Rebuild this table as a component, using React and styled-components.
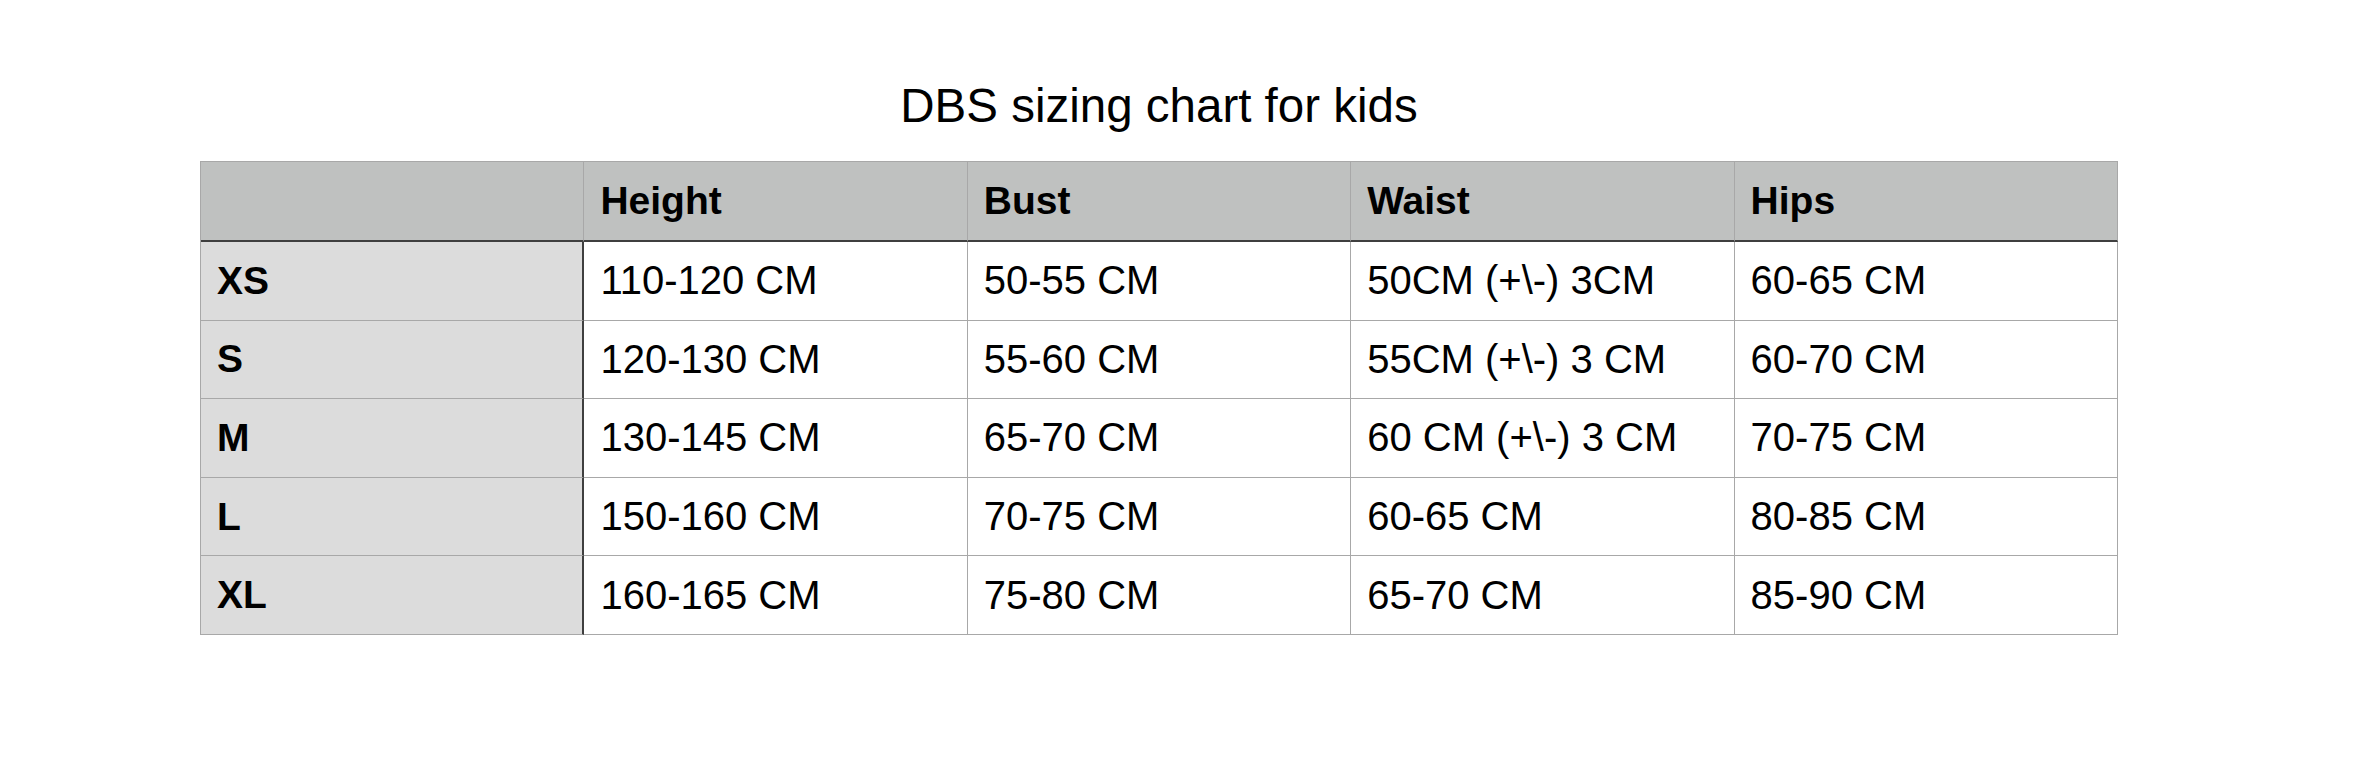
import React from 'react';
import styled, { createGlobalStyle } from 'styled-components';

const GlobalStyle = createGlobalStyle`
  body {
    margin: 0;
    background: #ffffff;
    font-family: 'Liberation Sans', Arial, sans-serif;
    color: #000000;
  }
`;

const Page = styled.div`
  width: 2369px;
  height: 782px;
  padding-top: 82px;
  box-sizing: border-box;
`;

const Chart = styled.div`
  margin-left: 200px;
  width: 1918px;
`;

const Title = styled.h1`
  margin: 0 0 32px;
  font-size: 47.5px;
  line-height: 47px;
  font-weight: normal;
  text-align: center;
`;

const Grid = styled.div`
  display: grid;
  grid-template-columns: repeat(5, 1fr);
  grid-template-rows: 80px repeat(5, 78.6px);
  border-top: 1px solid #a8a8a8;
  border-left: 1px solid #a8a8a8;
`;

const Cell = styled.div`
  display: flex;
  align-items: center;
  padding-left: 16px;
  font-size: ${(p) => (p.$bold ? '39px' : '40px')};
  font-weight: ${(p) => (p.$bold ? 'bold' : 'normal')};
  background: ${(p) => (p.$head ? '#bfc1c0' : p.$side ? '#dcdcdc' : '#ffffff')};
  border-right: ${(p) => (p.$side && !p.$head ? '2px solid #3f3f3f' : '1px solid #a8a8a8')};
  border-bottom: ${(p) => (p.$head ? '2px solid #3f3f3f' : '1px solid #a8a8a8')};
  box-sizing: border-box;
  white-space: nowrap;
`;

const headers = ['', 'Height', 'Bust', 'Waist', 'Hips'];

const rows = [
  ['XS', '110-120 CM', '50-55 CM', '50CM (+\\-) 3CM', '60-65 CM'],
  ['S', '120-130 CM', '55-60 CM', '55CM (+\\-) 3 CM', '60-70 CM'],
  ['M', '130-145 CM', '65-70 CM', '60 CM (+\\-) 3 CM', '70-75 CM'],
  ['L', '150-160 CM', '70-75 CM', '60-65 CM', '80-85 CM'],
  ['XL', '160-165 CM', '75-80 CM', '65-70 CM', '85-90 CM'],
];

export default function App() {
  return (
    <Page>
      <GlobalStyle />
      <Chart>
        <Title>DBS sizing chart for kids</Title>
        <Grid>
          {headers.map((h, i) => (
            <Cell key={'h' + i} $head $bold $side={i === 0}>
              {h}
            </Cell>
          ))}
          {rows.map((r) =>
            r.map((v, i) => (
              <Cell key={r[0] + i} $side={i === 0} $bold={i === 0}>
                {v}
              </Cell>
            ))
          )}
        </Grid>
      </Chart>
    </Page>
  );
}
